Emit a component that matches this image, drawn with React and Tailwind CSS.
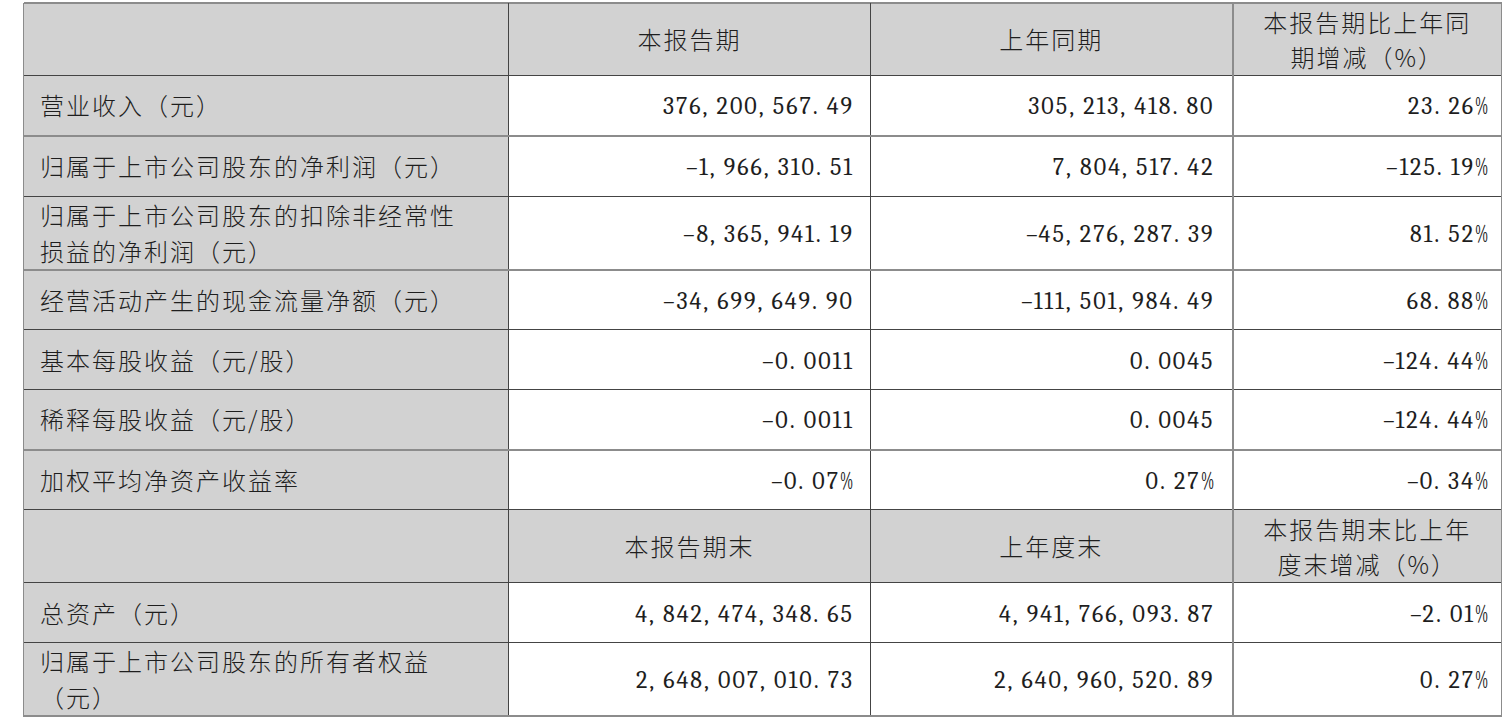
import React from "react";

const rows1 = [
  { label: ["营业收入（元）"], a: "376,200,567.49", b: "305,213,418.80", c: "23.26%", h: "h-[61px]", line: "thick" },
  { label: ["归属于上市公司股东的净利润（元）"], a: "-1,966,310.51", b: "7,804,517.42", c: "-125.19%", h: "h-[60px]", line: "thin" },
  { label: ["归属于上市公司股东的扣除非经常性", "损益的净利润（元）"], a: "-8,365,941.19", b: "-45,276,287.39", c: "81.52%", h: "h-[73px]", line: "thick" },
  { label: ["经营活动产生的现金流量净额（元）"], a: "-34,699,649.90", b: "-111,501,984.49", c: "68.88%", h: "h-[60px]", line: "thin" },
  { label: ["基本每股收益（元/股）"], a: "-0.0011", b: "0.0045", c: "-124.44%", h: "h-[60px]", line: "thin" },
  { label: ["稀释每股收益（元/股）"], a: "-0.0011", b: "0.0045", c: "-124.44%", h: "h-[60px]", line: "thick" },
  { label: ["加权平均净资产收益率"], a: "-0.07%", b: "0.27%", c: "-0.34%", h: "h-[60px]", line: "thin" },
];

const rows2 = [
  { label: ["总资产（元）"], a: "4,842,474,348.65", b: "4,941,766,093.87", c: "-2.01%", h: "h-[60px]", line: "thin" },
  { label: ["归属于上市公司股东的所有者权益", "（元）"], a: "2,648,007,010.73", b: "2,640,960,520.89", c: "0.27%", h: "h-[72px]", line: "thick" },
];

// SimSun-style half-width punctuation
function Num({ v }) {
  return (
    <span className="font-serif font-normal tracking-[2px]">
      {v.split("").map((c, i) => {
        if (c === "," || c === ".")
          return (
            <span key={i} className="inline-block w-[14px] text-left">
              {c}
            </span>
          );
        if (c === "-")
          return (
            <span key={i} className="inline-block w-[14px] text-center">
              <span className="inline-block tracking-normal scale-x-[1.8]">-</span>
            </span>
          );
        if (c === "%")
          return (
            <span key={i} className="inline-block w-[14px] text-left">
              <span className="inline-block tracking-normal scale-x-[0.62] origin-left">%</span>
            </span>
          );
        return c;
      })}
    </span>
  );
}

function Lines({ lines }) {
  return lines.map((l, i) => (
    <React.Fragment key={i}>
      {i > 0 && <br />}
      {l}
    </React.Fragment>
  ));
}

const bottom = (line) =>
  line === "thick" ? "border-b-2 border-b-[#8c8c8c]" : "border-b border-b-[#444]";

function Header({ cols, h }) {
  return (
    <tr className={`${h} bg-[#d2d2d2] border-b border-b-[#444]`}>
      <td className="border-r border-r-[#444] border-l border-l-[#8c8c8c]"></td>
      <td className="text-center border-r border-r-[#444]">{cols[0]}</td>
      <td className="text-center border-r-2 border-r-[#8c8c8c]">{cols[1]}</td>
      <td className="text-center leading-[35px] border-r border-r-[#8c8c8c]">
        <Lines lines={cols[2]} />
      </td>
    </tr>
  );
}

function DataRow({ r }) {
  return (
    <tr className={`${r.h} ${bottom(r.line)}`}>
      <td className="bg-[#d2d2d2] pl-[16px] leading-[36px] border-r border-r-[#444] border-l border-l-[#8c8c8c]">
        <Lines lines={r.label} />
      </td>
      <td className="bg-white text-right pr-[16px] border-r border-r-[#444]">
        <Num v={r.a} />
      </td>
      <td className="bg-white text-right pr-[17px] border-r-2 border-r-[#8c8c8c]">
        <Num v={r.b} />
      </td>
      <td className="bg-white text-right pr-[12px] border-r border-r-[#8c8c8c]">
        <Num v={r.c} />
      </td>
    </tr>
  );
}

export default function App() {
  return (
    <div className="w-[1511px] h-[725px] bg-white pt-[2px] pl-[23px] overflow-hidden">
      <table className="table-fixed border-collapse w-[1478px] text-[24px] tracking-[2px] text-[#1e1e1e] [font-family:'Noto_Sans_CJK_SC','Noto_Sans_CJK_TC',sans-serif] font-light">
        <colgroup>
          <col className="w-[485px]" />
          <col className="w-[362px]" />
          <col className="w-[362px]" />
          <col className="w-[269px]" />
        </colgroup>
        <tbody>
          <tr className="border-t-2 border-t-[#8c8c8c]"></tr>
          <Header cols={["本报告期", "上年同期", ["本报告期比上年同", "期增减（%）"]]} h="h-[72px]" />
          {rows1.map((r, i) => (
            <DataRow key={i} r={r} />
          ))}
          <Header cols={["本报告期末", "上年度末", ["本报告期末比上年", "度末增减（%）"]]} h="h-[73px]" />
          {rows2.map((r, i) => (
            <DataRow key={i} r={r} />
          ))}
        </tbody>
      </table>
    </div>
  );
}
